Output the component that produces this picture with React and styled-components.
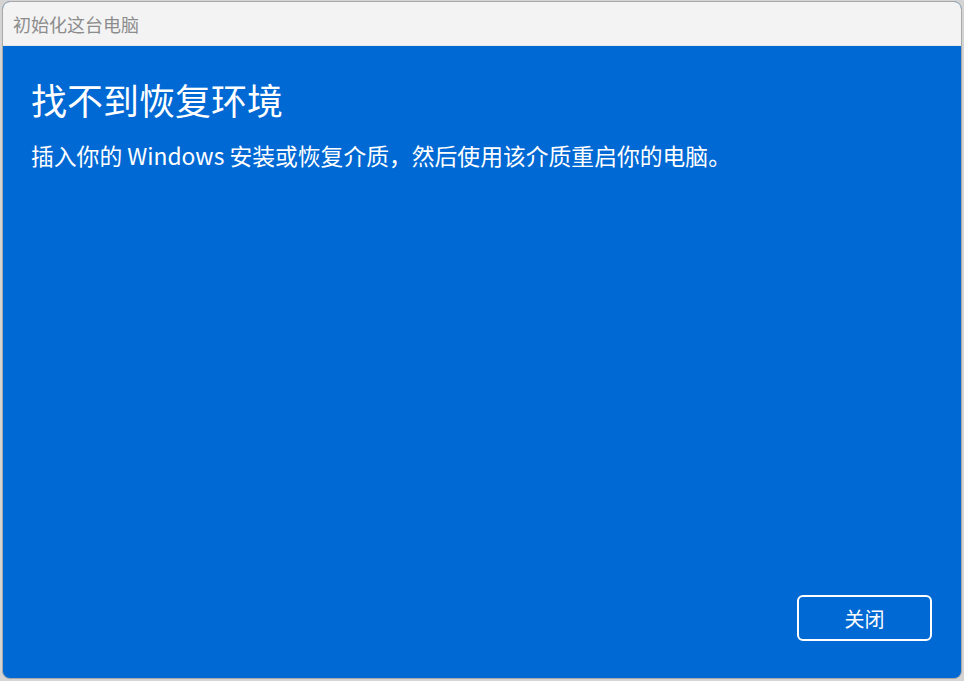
import React from "react";
import styled, { createGlobalStyle } from "styled-components";

const GlobalStyle = createGlobalStyle`
  html, body {
    margin: 0;
    padding: 0;
    background: #d4d4d4;
    overflow: hidden;
  }
  body {
    font-family: "Noto Sans CJK SC", "Noto Sans", sans-serif;
  }
`;

const Screen = styled.div`
  width: 964px;
  height: 681px;
  padding: 1px 2px 2px 2px;
  box-sizing: border-box;
  display: flex;
`;

const Window = styled.div`
  flex: 1;
  display: flex;
  flex-direction: column;
  border: 1px solid #a8a8a8;
  border-radius: 8px;
  overflow: hidden;
  background: #0069d4;
`;

const TitleBar = styled.div`
  height: 43px;
  background: #f3f3f3;
  border-bottom: 1px solid #e6e6e6;
  display: flex;
  align-items: center;
  padding-left: 10px;
  font-size: 18px;
  color: #8c8c8c;
`;

const Body = styled.div`
  flex: 1;
  display: flex;
  flex-direction: column;
  padding: 28px 29px 37px 28px;
  color: #fff;
`;

const Heading = styled.h1`
  margin: 0;
  font-size: 36px;
  font-weight: 400;
  line-height: 50px;
`;

const Text = styled.p`
  margin: 17px 0 0 0;
  font-size: 22.8px;
  line-height: 30px;
`;

const Footer = styled.div`
  margin-top: auto;
  display: flex;
  justify-content: flex-end;
`;

const Button = styled.button`
  width: 135px;
  height: 46px;
  border: 2px solid #fff;
  border-radius: 6px;
  background: transparent;
  color: #fff;
  font-family: inherit;
  font-size: 20px;
`;

export default function App() {
  return (
    <>
      <GlobalStyle />
      <Screen>
        <Window>
          <TitleBar>初始化这台电脑</TitleBar>
          <Body>
            <Heading>找不到恢复环境</Heading>
            <Text>插入你的 Windows 安装或恢复介质，然后使用该介质重启你的电脑。</Text>
            <Footer>
              <Button>关闭</Button>
            </Footer>
          </Body>
        </Window>
      </Screen>
    </>
  );
}
